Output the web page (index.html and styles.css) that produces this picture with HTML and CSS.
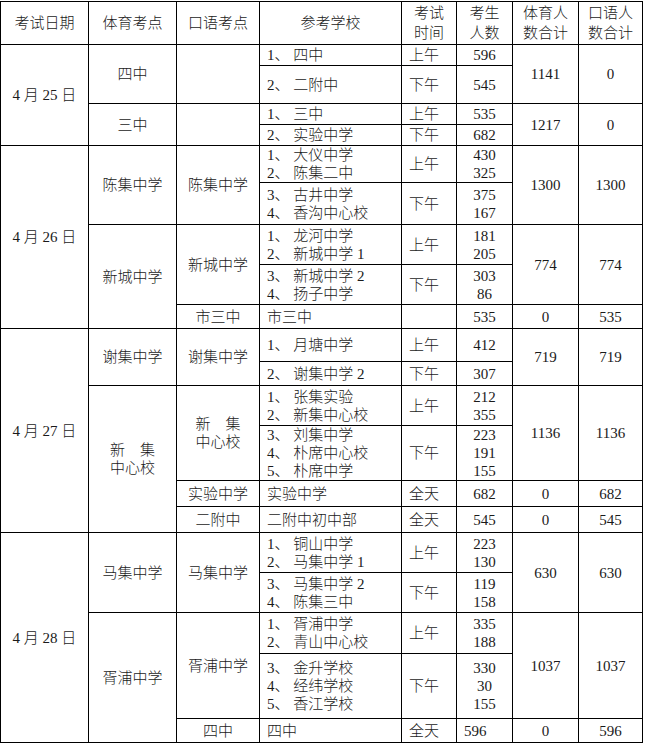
FILE: index.html
```html
<!DOCTYPE html>
<html lang="zh-CN">
<head>
<meta charset="utf-8">
<title>考试安排</title>
<link rel="stylesheet" href="styles.css">
</head>
<body>
<table class="sched">
  <colgroup>
    <col class="c1"><col class="c2"><col class="c3"><col class="c4"><col class="c5"><col class="c6"><col class="c7"><col class="c8">
  </colgroup>
  <tr class="h43 head">
    <td>考试日期</td><td>体育考点</td><td>口语考点</td><td>参考学校</td><td>考试<br>时间</td><td>考生<br>人数</td><td>体育人<br>数合计</td><td>口语人<br>数合计</td>
  </tr>
  <tr class="h21">
    <td rowspan="4">4 月 25 日</td><td rowspan="2">四中</td><td rowspan="2"></td><td class="l">1、 四中</td><td class="l">上午</td><td>596</td><td rowspan="2">1141</td><td rowspan="2">0</td>
  </tr>
  <tr class="h38">
    <td class="l">2、 二附中</td><td class="l">下午</td><td>545</td>
  </tr>
  <tr class="h21">
    <td rowspan="2">三中</td><td rowspan="2"></td><td class="l">1、 三中</td><td class="l">上午</td><td>535</td><td rowspan="2">1217</td><td rowspan="2">0</td>
  </tr>
  <tr class="h21">
    <td class="l">2、 实验中学</td><td class="l">下午</td><td>682</td>
  </tr>
  <tr class="h37">
    <td rowspan="5">4 月 26 日</td><td rowspan="2">陈集中学</td><td rowspan="2">陈集中学</td><td class="l">1、 大仪中学<br>2、 陈集二中</td><td class="l">上午</td><td>430<br>325</td><td rowspan="2">1300</td><td rowspan="2">1300</td>
  </tr>
  <tr class="h42">
    <td class="l">3、 古井中学<br>4、 香沟中心校</td><td class="l">下午</td><td>375<br>167</td>
  </tr>
  <tr class="h40">
    <td rowspan="3">新城中学</td><td rowspan="2">新城中学</td><td class="l">1、 龙河中学<br>2、 新城中学 1</td><td class="l">上午</td><td>181<br>205</td><td rowspan="2">774</td><td rowspan="2">774</td>
  </tr>
  <tr class="h40">
    <td class="l">3、 新城中学 2<br>4、 扬子中学</td><td class="l">下午</td><td>303<br>86</td>
  </tr>
  <tr class="h24">
    <td>市三中</td><td class="l">市三中</td><td class="l"></td><td>535</td><td>0</td><td>535</td>
  </tr>
  <tr class="h33">
    <td rowspan="6">4 月 27 日</td><td rowspan="2">谢集中学</td><td rowspan="2">谢集中学</td><td class="l">1、 月塘中学</td><td class="l">上午</td><td>412</td><td rowspan="2">719</td><td rowspan="2">719</td>
  </tr>
  <tr class="h24">
    <td class="l">2、 谢集中学 2</td><td class="l">下午</td><td>307</td>
  </tr>
  <tr class="h40">
    <td rowspan="4">新&emsp;集<br>中心校</td><td rowspan="2">新&emsp;集<br>中心校</td><td class="l">1、 张集实验<br>2、 新集中心校</td><td class="l">上午</td><td>212<br>355</td><td rowspan="2">1136</td><td rowspan="2">1136</td>
  </tr>
  <tr class="h55">
    <td class="l">3、 刘集中学<br>4、 朴席中心校<br>5、 朴席中学</td><td class="l">下午</td><td>223<br>191<br>155</td>
  </tr>
  <tr class="h26">
    <td>实验中学</td><td class="l">实验中学</td><td class="l">全天</td><td>682</td><td>0</td><td>682</td>
  </tr>
  <tr class="h26">
    <td>二附中</td><td class="l">二附中初中部</td><td class="l">全天</td><td>545</td><td>0</td><td>545</td>
  </tr>
  <tr class="h40">
    <td rowspan="5">4 月 28 日</td><td rowspan="2">马集中学</td><td rowspan="2">马集中学</td><td class="l">1、 铜山中学<br>2、 马集中学 1</td><td class="l">上午</td><td>223<br>130</td><td rowspan="2">630</td><td rowspan="2">630</td>
  </tr>
  <tr class="h40">
    <td class="l">3、 马集中学 2<br>4、 陈集三中</td><td class="l">下午</td><td>119<br>158</td>
  </tr>
  <tr class="h41">
    <td rowspan="3">胥浦中学</td><td rowspan="2">胥浦中学</td><td class="l">1、 胥浦中学<br>2、 青山中心校</td><td class="l">上午</td><td>335<br>188</td><td rowspan="2">1037</td><td rowspan="2">1037</td>
  </tr>
  <tr class="h65">
    <td class="l">3、 金升学校<br>4、 经纬学校<br>5、 香江学校</td><td class="l">下午</td><td>330<br>30<br>155</td>
  </tr>
  <tr class="h24">
    <td>四中</td><td class="l">四中</td><td class="l">全天</td><td class="l">596</td><td>0</td><td>596</td>
  </tr>
</table>
</body>
</html>
```

FILE: styles.css
```css
html, body {
  margin: 0;
  padding: 0;
  background: #fff;
}

body {
  padding-top: 1px;
  font-family: "Liberation Serif", "Noto Sans CJK SC", serif;
  font-size: 15px;
  color: #1a1a1a;
}

.sched {
  border-collapse: collapse;
  table-layout: fixed;
  width: 642px;
}

.sched td {
  border: 1px solid #000;
  padding: 0;
  text-align: center;
  vertical-align: middle;
  line-height: 18px;
  font-weight: 300;
  white-space: nowrap;
  overflow: hidden;
}

.sched td.l {
  text-align: left;
  padding-left: 7px;
}

.head td {
  line-height: 20px;
}

.c1 { width: 88px; }
.c2 { width: 88px; }
.c3 { width: 83px; }
.c4 { width: 142px; }
.c5 { width: 55px; }
.c6 { width: 56px; }
.c7 { width: 66px; }
.c8 { width: 64px; }

.h21 { height: 21px; }
.h24 { height: 24px; }
.h26 { height: 26px; }
.h33 { height: 33px; }
.h37 { height: 37px; }
.h38 { height: 38px; }
.h40 { height: 40px; }
.h41 { height: 41px; }
.h42 { height: 42px; }
.h43 { height: 43px; }
.h55 { height: 55px; }
.h65 { height: 65px; }
```
